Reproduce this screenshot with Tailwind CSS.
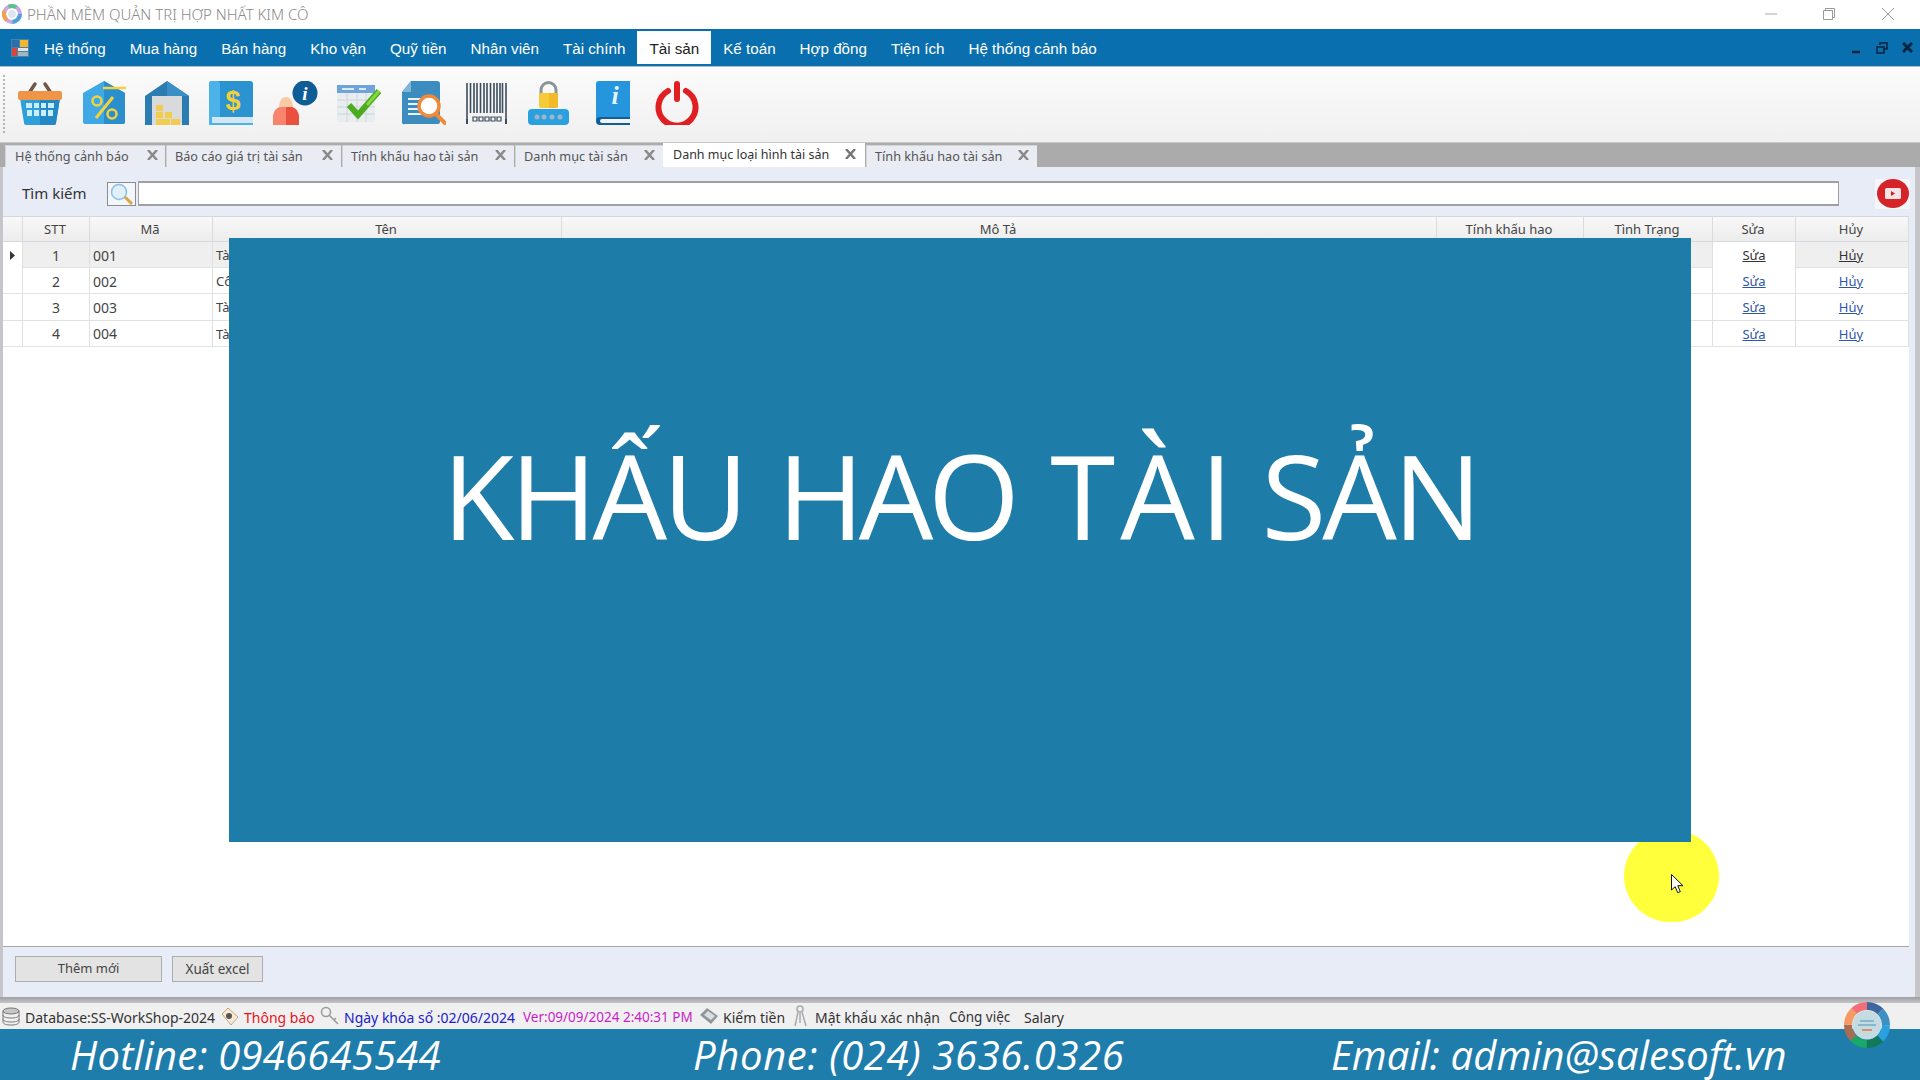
<!DOCTYPE html>
<html lang="vi">
<head>
<meta charset="utf-8">
<title>Phần mềm quản trị hợp nhất Kim Cô</title>
<script src="https://cdn.jsdelivr.net/npm/@tailwindcss/browser@4"></script>
</head>
<body class="m-0 overflow-hidden">
<div class="relative w-[1920px] h-[1080px] overflow-hidden flex flex-col bg-white font-['Noto_Sans',sans-serif] text-[#333]">

    <!-- Title bar -->
    <div class="h-[29px] flex items-center bg-white shrink-0 pb-[1px]">
        <svg class="ml-[2px] w-[20px] h-[20px]" viewBox="0 0 20 20" fill="none">
            <circle cx="10" cy="10" r="8" stroke="#c9a6e4" stroke-width="4"/>
            <circle cx="10" cy="10" r="8" stroke="#4aa3df" stroke-width="4" stroke-dasharray="12 38"/>
            <circle cx="10" cy="10" r="8" stroke="#f0a14a" stroke-width="4" stroke-dasharray="10 40" stroke-dashoffset="-18"/>
            <circle cx="10" cy="10" r="8" stroke="#5cc08a" stroke-width="4" stroke-dasharray="8 42" stroke-dashoffset="-34"/>
            <circle cx="10" cy="10" r="4" fill="#dfe5ee"/>
        </svg>
        <span class="ml-[5px] text-[15px] font-light text-[#8a8a8a] whitespace-nowrap">PHẦN MỀM QUẢN TRỊ HỢP NHẤT KIM CÔ</span>
        <div class="ml-auto flex items-center">
            <svg class="w-[12px] h-[12px] mr-[46px]" viewBox="0 0 12 12"><path d="M0 6h12" stroke="#aaa"/></svg>
            <svg class="w-[12px] h-[12px] mr-[47px]" viewBox="0 0 12 12" fill="none" stroke="#999"><path d="M.5 2.500h9v9h-9zM2.500 2.500v-2h9v9h-2"/></svg>
            <svg class="w-[12px] h-[12px] mr-[26px]" viewBox="0 0 12 12" stroke="#999"><path d="M0 0l12 12M12 0L0 12"/></svg>
        </div>
    </div>

    <!-- Menu bar -->
    <div class="h-[38px] shrink-0 bg-[#0a6fae] border-b border-[#a9bdd0] flex items-center text-white text-[15.200px] font-['Liberation_Sans',sans-serif]">
        <svg class="ml-[11px] w-[18px] h-[18px] mr-[3px]" viewBox="0 0 18 18">
            <rect width="18" height="18" fill="#4d7f9e"/>
            <rect x="1" y="1" width="7" height="7" fill="#2a6fb0"/>
            <rect x="9" y="1" width="8" height="7" fill="#f2b632"/>
            <rect x="1" y="9" width="5" height="8" fill="#d8453c"/>
            <rect x="7" y="9" width="10" height="3" fill="#dfe6ea"/>
            <rect x="7" y="13" width="10" height="4" fill="#9fb6c4"/>
        </svg>
        <a class="px-3 h-[33px] pt-[2px] leading-[31px] whitespace-nowrap">Hệ thống</a>
        <a class="px-3 h-[33px] pt-[2px] leading-[31px] whitespace-nowrap">Mua hàng</a>
        <a class="px-3 h-[33px] pt-[2px] leading-[31px] whitespace-nowrap">Bán hàng</a>
        <a class="px-3 h-[33px] pt-[2px] leading-[31px] whitespace-nowrap">Kho vận</a>
        <a class="px-3 h-[33px] pt-[2px] leading-[31px] whitespace-nowrap">Quỹ tiền</a>
        <a class="px-3 h-[33px] pt-[2px] leading-[31px] whitespace-nowrap">Nhân viên</a>
        <a class="px-3 h-[33px] pt-[2px] leading-[31px] whitespace-nowrap">Tài chính</a>
        <a class="px-3 h-[33px] pt-[2px] leading-[31px] whitespace-nowrap bg-white text-[#222]">Tài sản</a>
        <a class="px-3 h-[33px] pt-[2px] leading-[31px] whitespace-nowrap">Kế toán</a>
        <a class="px-3 h-[33px] pt-[2px] leading-[31px] whitespace-nowrap">Hợp đồng</a>
        <a class="px-3 h-[33px] pt-[2px] leading-[31px] whitespace-nowrap">Tiện ích</a>
        <a class="px-3 h-[33px] pt-[2px] leading-[31px] whitespace-nowrap">Hệ thống cảnh báo</a>
        <div class="ml-auto flex items-center">
            <svg class="w-[8px] h-[12px] mr-[16px]" viewBox="0 0 8 12"><path d="M0 10h8" stroke="#06263f" stroke-width="2.500"/></svg>
            <svg class="w-[12px] h-[12px] mr-[14px]" viewBox="0 0 12 12" fill="none" stroke="#06263f" stroke-width="1.600"><path d="M1 5h7v6H1zM1 5V4M4 3V1h7v6H8"/></svg>
            <svg class="w-[11px] h-[11px] mr-[7px]" viewBox="0 0 11 11" stroke="#06263f" stroke-width="3"><path d="M1 1l9 9M10 1l-9 9"/></svg>
        </div>
    </div>

    <!-- Toolbar -->
    <div class="relative h-[75px] shrink-0 bg-gradient-to-b from-[#fbfbfb] to-[#f0f0f0] flex items-center gap-[19.700px] pl-[18px] pb-[3px]">
        <div class="absolute left-[3px] top-[8px] h-[58px] border-l-2 border-dotted border-[#b5b5b5]"></div>
        <!-- basket -->
        <svg class="w-[44px] h-[44px]" viewBox="0 0 44 44">
            <path d="M11 12L17 3M33 12L27 3" stroke="#6b5a4c" stroke-width="3.500" stroke-linecap="round"/>
            <path d="M2 17h40l-4 25a2 2 0 0 1-2 2H8a2 2 0 0 1-2-2z" fill="#2f9fdc"/>
            <path d="M22 17h20l-4 25a2 2 0 0 1-2 2H22z" fill="#2488c6"/>
            <rect x="0" y="10" width="44" height="9" rx="2" fill="#ee9547"/>
            <path d="M8 22h6v5H8zM16 22h5v5h-5zM23 22h5v5h-5zM30 22h6v5h-6zM9 29h5v6H9zM16 29h5v6h-5zM23 29h5v6h-5zM30 29h5v6h-5z" fill="#c9eeff"/>
        </svg>
        <!-- tag -->
        <svg class="w-[44px] h-[44px]" viewBox="0 0 44 44">
            <path d="M22 0L43 12v29a2 2 0 0 1-2 2H3a2 2 0 0 1-2-2V12z" fill="#3fa9e6"/>
            <path d="M22 0L43 12v29a2 2 0 0 1-2 2H22z" fill="#2a8fcc"/>
            <path d="M21 7h23" stroke="#f4d23d" stroke-width="2.500"/>
            <path d="M31 16L14 37" stroke="#f4d23d" stroke-width="3"/>
            <circle cx="15" cy="20" r="4.500" fill="none" stroke="#f4d23d" stroke-width="2.500"/>
            <circle cx="30" cy="33" r="4.500" fill="none" stroke="#f4d23d" stroke-width="2.500"/>
        </svg>
        <!-- warehouse -->
        <svg class="w-[44px] h-[44px]" viewBox="0 0 44 44">
            <path d="M22 0L44 15v29H0V15z" fill="#2b7cb0"/>
            <path d="M22 0L44 15H22z" fill="#3a90c6"/>
            <rect x="7" y="15" width="30" height="29" fill="#d9dadb"/>
            <path d="M11 24h7v6h-7zM11 31h7v6h-7zM11 38h14v6H11zM20 31h7v6h-7zM26 38h9v6h-9z" fill="#f2cc4e"/>
        </svg>
        <!-- book dollar -->
        <svg class="w-[44px] h-[44px]" viewBox="0 0 44 44">
            <rect x="0" y="0" width="44" height="44" rx="3" fill="#2a93d0"/>
            <rect x="0" y="0" width="11" height="44" rx="3" fill="#4bb2ea"/>
            <path d="M3 36h41v6H3z" fill="#d4e6f2"/>
            <path d="M0 43h44" stroke="#4bb2ea" stroke-width="2"/>
            <text x="24" y="29" text-anchor="middle" font-family="Liberation Sans" font-size="27" font-weight="700" fill="#f4cf3a">$</text>
        </svg>
        <!-- person info -->
        <svg class="w-[45px] h-[44px]" viewBox="0 0 45 44">
            <path d="M6 28c0-9 3-12 7-12s7 3 7 12z" fill="#f8cba6"/>
            <path d="M0 44v-8c0-5 3-9 7-10h6v18z" fill="#f8846d"/>
            <path d="M13 26h6c4 1 7 5 7 10v8H13z" fill="#e9503e"/>
            <circle cx="32" cy="12" r="12.500" fill="#0f5d96"/>
            <text x="32" y="19" text-anchor="middle" font-family="Liberation Serif" font-size="19" font-weight="700" font-style="italic" fill="#fff">i</text>
        </svg>
        <!-- calendar check -->
        <svg class="w-[45px] h-[44px]" viewBox="0 0 45 44">
            <rect x="0" y="4" width="38" height="37" fill="#e8edf0"/>
            <rect x="0" y="4" width="38" height="8" fill="#6ea3dc"/>
            <path d="M5 8h12M22 8h7" stroke="#dcebf8" stroke-width="2"/>
            <path d="M0 19h38M0 26h38M0 33h38M10 12v29M20 12v29M29 12v29" stroke="#cfd5da"/>
            <path d="M12 24l9 10 21-24" fill="none" stroke="#4cab1f" stroke-width="6"/>
            <path d="M30 24l12-14" fill="none" stroke="#86d63f" stroke-width="3"/>
        </svg>
        <!-- doc search -->
        <svg class="w-[44px] h-[44px]" viewBox="0 0 44 44">
            <path d="M9 0h26a3 3 0 0 1 3 3v38a2 2 0 0 1-2 2H3a2 2 0 0 1-3-2V11z" fill="#3d8cc0"/>
            <path d="M9 0v11H0z" fill="#7fb6da"/>
            <path d="M6 18h16M6 23h12M6 28h12M6 33h14" stroke="#e9f4fb" stroke-width="2"/>
            <circle cx="27" cy="25" r="10" fill="#fff" stroke="#ef8a3c" stroke-width="3.500"/>
            <path d="M34 33l9 9" stroke="#ef8a3c" stroke-width="4" stroke-linecap="round"/>
        </svg>
        <!-- barcode -->
        <svg class="w-[41px] h-[44px] mr-[1px]" viewBox="0 0 41 44">
            <path d="M1 2v36M4.500 2v30M8 2v30M11 2v30M14.500 2v30M18 2v30M21 2v30M24.500 2v30M28 2v30M31 2v30M34 2v30M36.500 2v30M40 2v40" stroke="#3c4c5c" stroke-width="1.600"/>
            <path d="M1 38v5M40 38v5" stroke="#3c4c5c" stroke-width="2"/>
            <path d="M7 36h4v4H7zM13 36h4v4h-4zM19 36h4v4h-4zM25 36h4v4h-4zM31 36h4v4h-4z" fill="none" stroke="#3c4c5c" stroke-width="1.200"/>
        </svg>
        <!-- lock -->
        <svg class="w-[41px] h-[44px]" viewBox="0 0 41 44">
            <path d="M13 14V9a7.500 7.500 0 0 1 15 0v5" fill="none" stroke="#8c949a" stroke-width="3"/>
            <rect x="11" y="12" width="19" height="15" rx="2" fill="#f6ca37"/>
            <path d="M21 12h9v13a2 2 0 0 1-2 2h-7z" fill="#f2b928"/>
            <rect x="0" y="28" width="41" height="16" rx="4" fill="#2ba0e0"/>
            <circle cx="9" cy="36" r="2.500" fill="#9fb4c4"/><circle cx="16" cy="36" r="2.500" fill="#9fb4c4"/><circle cx="24" cy="36" r="2.500" fill="#9fb4c4"/><circle cx="32" cy="36" r="2.500" fill="#9fb4c4"/>
        </svg>
        <!-- book info -->
        <svg class="w-[34px] h-[44px] ml-[8px]" viewBox="0 0 34 44">
            <path d="M3 0h31v37H6a6 6 0 0 0-6 3V3a3 3 0 0 1 3-3z" fill="#2596de"/>
            <path d="M0 40a4 4 0 0 1 4-4h30v2H6a2 2 0 0 0 0 4h28v2H4a4 4 0 0 1-4-4z" fill="#125f96"/>
            <text x="19" y="23" text-anchor="middle" font-family="Liberation Serif" font-size="26" font-weight="700" font-style="italic" fill="#e4f5ff">i</text>
        </svg>
        <!-- power -->
        <svg class="w-[44px] h-[44px] ml-[5px]" viewBox="0 0 44 44" fill="none">
            <path d="M13 10a18.500 18.500 0 1 0 18 0" stroke="#e01f22" stroke-width="6" stroke-linecap="round"/>
            <path d="M22 3v15" stroke="#e01f22" stroke-width="6" stroke-linecap="round"/>
        </svg>
    </div>

    <!-- Document tabs -->
    <div class="h-[25px] shrink-0 bg-[#ababab] border-t border-[#c8c8c8] flex items-end pl-[5px] text-[12.700px] text-[#555]">
        <div class="w-[160px] h-[22px] mr-px flex items-center bg-[#e9ecf3] border-l border-t border-[#d5d5d5] pl-[9px] whitespace-nowrap">Hệ thống cảnh báo<svg class="ml-auto mr-[7px] mb-[3px] w-[11px] h-[10px]" viewBox="0 0 11 10" stroke="#8a8a8a" stroke-width="2.500"><path d="M1 0l9 10M10 0L1 10"/></svg></div>
        <div class="w-[175px] h-[22px] mr-px flex items-center bg-[#e9ecf3] border-l border-t border-[#d5d5d5] pl-[8px] whitespace-nowrap">Báo cáo giá trị tài sản<svg class="ml-auto mr-[8px] mb-[3px] w-[11px] h-[10px]" viewBox="0 0 11 10" stroke="#8a8a8a" stroke-width="2.500"><path d="M1 0l9 10M10 0L1 10"/></svg></div>
        <div class="w-[172px] h-[22px] mr-px flex items-center bg-[#e9ecf3] border-l border-t border-[#d5d5d5] pl-[8px] whitespace-nowrap">Tính khấu hao tài sản<svg class="ml-auto mr-[8px] mb-[3px] w-[11px] h-[10px]" viewBox="0 0 11 10" stroke="#8a8a8a" stroke-width="2.500"><path d="M1 0l9 10M10 0L1 10"/></svg></div>
        <div class="w-[148px] h-[22px] flex items-center bg-[#e9ecf3] border-l border-t border-[#d5d5d5] pl-[8px] whitespace-nowrap">Danh mục tài sản<svg class="ml-auto mr-[8px] mb-[3px] w-[11px] h-[10px]" viewBox="0 0 11 10" stroke="#8a8a8a" stroke-width="2.500"><path d="M1 0l9 10M10 0L1 10"/></svg></div>
        <div class="w-[202px] h-[24px] flex items-center bg-white pl-[10px] text-[12.500px] text-[#333] whitespace-nowrap">Danh mục loại hình tài sản<svg class="ml-auto mr-[9px] mb-[3px] w-[11px] h-[10px]" viewBox="0 0 11 10" stroke="#777" stroke-width="2.500"><path d="M1 0l9 10M10 0L1 10"/></svg></div>
        <div class="w-[171px] h-[22px] ml-px flex items-center bg-[#e9ecf3] border-l border-t border-[#d5d5d5] pl-[8px] whitespace-nowrap">Tính khấu hao tài sản<svg class="ml-auto mr-[8px] mb-[3px] w-[11px] h-[10px]" viewBox="0 0 11 10" stroke="#8a8a8a" stroke-width="2.500"><path d="M1 0l9 10M10 0L1 10"/></svg></div>
    </div>

    <!-- Main panel -->
    <div class="h-[830px] shrink-0 flex bg-[#c6c6ca]">
        <div class="ml-[3px] w-[1912px] flex flex-col bg-[#e7ecf7]">
            <!-- Search -->
            <div class="h-[49px] shrink-0 flex items-center pt-[4px]">
                <span class="ml-[19px] w-[66px] text-[15px] text-[#333] whitespace-nowrap">Tìm kiếm</span>
                <div class="ml-[19px] w-[29px] h-[24px] bg-[#f3f6fb] border border-[#8c8c8c] flex items-center justify-center">
                    <svg class="w-[26px] h-[22px]" viewBox="0 0 26 22" fill="none">
                        <circle cx="10" cy="9" r="7.500" fill="#dff0fb" stroke="#8fbfe0" stroke-width="1.500"/>
                        <path d="M16 14l7 7" stroke="#dba53f" stroke-width="3"/>
                    </svg>
                </div>
                <div class="ml-[2px] w-[1701px] h-[25px] bg-white border-t-2 border-l border-r border-b-2 border-[#a0a0a4]"></div>
                <div class="ml-[36px] w-[35px] h-[30px] bg-[#f5f6fa] flex items-center justify-center">
                    <svg class="w-[32px] h-[29px]" viewBox="0 0 32 29">
                        <ellipse cx="16" cy="14.500" rx="16" ry="14.500" fill="#d5232a"/>
                        <rect x="8" y="9" width="16" height="11" rx="1.500" fill="#f6e3e3"/>
                        <path d="M14 12l4 2.500-4 2.500z" fill="#c22"/>
                    </svg>
                </div>
            </div>

            <!-- Grid -->
            <div class="h-[731px] shrink-0 w-[1906px] bg-white text-[13px] text-[#444] border-b border-[#a8a8a8]">
                <div class="grid grid-cols-[20px_67px_123px_349px_875px_147px_129px_83px_113px] h-[26px] border-y border-[#d5d9df] bg-gradient-to-b from-[#f8f8f8] to-[#ececec] text-center leading-[25px] [&>div]:border-r [&>div]:border-[#d8dbe0] [&>div]:pr-[2px]">
                    <div></div><div>STT</div><div class="pr-[4px]">Mã</div><div>Tên</div><div>Mô Tả</div><div>Tính khấu hao</div><div>Tình Trạng</div><div>Sửa</div><div>Hủy</div>
                </div>
                <div class="grid grid-cols-[20px_67px_123px_349px_875px_147px_129px_83px_113px] h-[26px] border-b border-[#e2e2e2] bg-[#efefef] leading-[27px] [&>div]:border-r [&>div]:border-[#e0e0e0]">
                    <div class="flex items-center justify-center bg-white"><svg class="w-[5px] h-[9px]" viewBox="0 0 5 9"><path d="M0 0l5 4.500L0 9z" fill="#333"/></svg></div>
                    <div class="text-center text-[14px]">1</div><div class="pl-[3px] text-[14px]">001</div><div class="pl-[3px]">Tài sản</div><div></div><div></div><div></div>
                    <div class="text-center bg-white underline text-[#333]">Sửa</div><div class="text-center pr-[2px] underline text-[#333]">Hủy</div>
                </div>
                <div class="grid grid-cols-[20px_67px_123px_349px_875px_147px_129px_83px_113px] h-[26px] border-b border-[#e2e2e2] leading-[27px] [&>div]:border-r [&>div]:border-[#e0e0e0]">
                    <div></div><div class="text-center text-[14px]">2</div><div class="pl-[3px] text-[14px]">002</div><div class="pl-[3px]">Công cụ</div><div></div><div></div><div></div>
                    <div class="text-center underline text-[#2f55a8]">Sửa</div><div class="text-center pr-[2px] underline text-[#2f55a8]">Hủy</div>
                </div>
                <div class="grid grid-cols-[20px_67px_123px_349px_875px_147px_129px_83px_113px] h-[27px] border-b border-[#e2e2e2] leading-[27px] [&>div]:border-r [&>div]:border-[#e0e0e0]">
                    <div></div><div class="text-center text-[14px]">3</div><div class="pl-[3px] text-[14px]">003</div><div class="pl-[3px]">Tài sản</div><div></div><div></div><div></div>
                    <div class="text-center underline text-[#2f55a8]">Sửa</div><div class="text-center pr-[2px] underline text-[#2f55a8]">Hủy</div>
                </div>
                <div class="grid grid-cols-[20px_67px_123px_349px_875px_147px_129px_83px_113px] h-[26px] border-b border-[#e2e2e2] leading-[26px] [&>div]:border-r [&>div]:border-[#e0e0e0]">
                    <div></div><div class="text-center text-[14px]">4</div><div class="pl-[3px] text-[14px]">004</div><div class="pl-[3px]">Tài sản</div><div></div><div></div><div></div>
                    <div class="text-center underline text-[#2f55a8]">Sửa</div><div class="text-center pr-[2px] underline text-[#2f55a8]">Hủy</div>
                </div>
            </div>

            <!-- Buttons -->
            <div class="flex-1 flex items-start pt-[9px] pl-[12px] gap-[10px] text-[13px] text-[#444]">
                <button class="w-[147px] h-[26px] bg-[#e3e3e3] border border-[#adadad]">Thêm mới</button>
                <button class="w-[91px] h-[26px] bg-[#e3e3e3] border border-[#adadad] text-[13.500px]">Xuất excel</button>
            </div>
        </div>
    </div>

    <div class="h-[6px] shrink-0 bg-gradient-to-b from-[#9e9ea4] to-[#c4c4c8]"></div>

    <!-- Status bar -->
    <div class="h-[26px] shrink-0 bg-[#f0f0f0] flex items-center text-[14px] text-[#333] whitespace-nowrap [&>span]:pt-[3px]">
        <svg class="ml-[2px] w-[18px] h-[19px]" viewBox="0 0 18 19" fill="#c4c6c8" stroke="#777"><ellipse cx="9" cy="4" rx="8" ry="3"/><path d="M1 4v11c0 2 3.500 3 8 3s8-1 8-3V4M1 8c0 2 3.500 3 8 3s8-1 8-3M1 12c0 2 3.500 3 8 3s8-1 8-3" fill="none"/></svg>
        <span class="ml-[5px] w-[189px]">Database:SS-WorkShop-2024</span>
        <svg class="ml-[6px] w-[19px] h-[19px]" viewBox="0 0 19 19"><path d="M2 7l6-6 10 9-7 8z" fill="#f6e9d8" stroke="#c9a678"/><circle cx="9" cy="9" r="3" fill="#555"/></svg>
        <span class="ml-[5px] w-[71px] text-[#e8141c]">Thông báo</span>
        <svg class="ml-[5px] w-[20px] h-[20px]" viewBox="0 0 20 20" fill="none" stroke="#9a9a9a" stroke-width="1.500"><circle cx="6" cy="6" r="4.500"/><path d="M9 9l9 9M14 14l2-2"/></svg>
        <span class="ml-[4px] w-[170px] text-[#2020c8]">Ngày khóa sổ :02/06/2024</span>
        <span class="ml-[9px] w-[170px] text-[13.500px] text-[#c81ec8]">Ver:09/09/2024 2:40:31 PM</span>
        <svg class="ml-[6px] w-[20px] h-[18px]" viewBox="0 0 20 18"><path d="M1 8l7-7 11 8-7 8z" fill="#8f979c"/><path d="M5 8l4-4 7 5-4 4z" fill="#d9dee1"/></svg>
        <span class="ml-[4px] w-[62px]">Kiểm tiền</span>
        <svg class="ml-[8px] w-[15px] h-[22px]" viewBox="0 0 15 22" fill="none" stroke="#aaa" stroke-width="1.500"><circle cx="7" cy="4" r="3"/><path d="M5 7L2 21M9 7l4 14M7 8v10"/></svg>
        <span class="ml-[7px] w-[124px]">Mật khẩu xác nhận</span>
        <span class="ml-[10px] w-[65px] text-[13.500px]">Công việc</span>
        <span class="ml-[10px]">Salary</span>
    </div>

    <!-- Contact footer -->
    <div class="h-[51px] shrink-0 bg-[#1f7dab] flex items-center pl-[70px] text-white italic text-[40px] font-['Open_Sans',sans-serif] whitespace-nowrap">
        <span class="w-[623px] tracking-[0.200px]">Hotline: 0946645544</span>
        <span class="w-[638px] tracking-[0.650px]">Phone: (024) 3636.0326</span>
        <span class="tracking-[0.100px]">Email: admin@salesoft.vn</span>
    </div>

    <!-- Cursor highlight, sits under the overlay -->
    <div class="absolute left-[1624px] top-[830px] w-[95px] h-[92px] rounded-full bg-[#ffff3c]"></div>

    <!-- Video caption overlay -->
    <div class="absolute left-[229px] top-[238px] w-[1462px] h-[604px] bg-[#1e7ca9] flex justify-center pt-[162px]">
        <span class="text-white text-[118px] leading-[190px] font-['Open_Sans',sans-serif] whitespace-nowrap"><span class="tracking-[-4.500px] mr-[7px]">KHẤU </span><span class="tracking-[-5.500px] mr-[11px]">HAO </span><span class="tracking-[5px] -mr-[12px]">TÀI </span><span class="tracking-[-4px]">SẢN</span></span>
    </div>

    <!-- Mouse pointer -->
    <svg class="absolute left-[1671px] top-[874px] w-[13px] h-[20px]" viewBox="0 0 13 20"><path d="M.5.500v15.500l3.700-3.300 2.500 6 2.600-1-2.500-6H12z" fill="#fff" stroke="#111"/></svg>

    <!-- App logo -->
    <svg class="absolute left-[1844px] top-[1002px] w-[46px] h-[46px]" viewBox="0 0 46 46" fill="none">
        <circle cx="23" cy="23" r="19" stroke="#3f66a0" stroke-width="8" stroke-dasharray="14.900 104.500" stroke-dashoffset="0" transform="rotate(-90 23 23)"/>
        <circle cx="23" cy="23" r="19" stroke="#3d8fc4" stroke-width="8" stroke-dasharray="14.900 104.500" stroke-dashoffset="-14.900" transform="rotate(-90 23 23)"/>
        <circle cx="23" cy="23" r="19" stroke="#2aa0e0" stroke-width="8" stroke-dasharray="14.900 104.500" stroke-dashoffset="-29.800" transform="rotate(-90 23 23)"/>
        <circle cx="23" cy="23" r="19" stroke="#12795a" stroke-width="8" stroke-dasharray="14.900 104.500" stroke-dashoffset="-44.700" transform="rotate(-90 23 23)"/>
        <circle cx="23" cy="23" r="19" stroke="#18a868" stroke-width="8" stroke-dasharray="14.900 104.500" stroke-dashoffset="-59.600" transform="rotate(-90 23 23)"/>
        <circle cx="23" cy="23" r="19" stroke="#a86d50" stroke-width="8" stroke-dasharray="14.900 104.500" stroke-dashoffset="-74.500" transform="rotate(-90 23 23)"/>
        <circle cx="23" cy="23" r="19" stroke="#f59a62" stroke-width="8" stroke-dasharray="14.900 104.500" stroke-dashoffset="-89.400" transform="rotate(-90 23 23)"/>
        <circle cx="23" cy="23" r="19" stroke="#f26f7a" stroke-width="8" stroke-dasharray="14.900 104.500" stroke-dashoffset="-104.300" transform="rotate(-90 23 23)"/>
        <circle cx="23" cy="23" r="14.500" fill="#c5dbe2"/>
        <path d="M16 19h14M14 23h18" stroke="#4c93b8"/>
        <path d="M18 28h10" stroke="#e2763c" stroke-width="1.500"/>
    </svg>
</div>
</body>
</html>
